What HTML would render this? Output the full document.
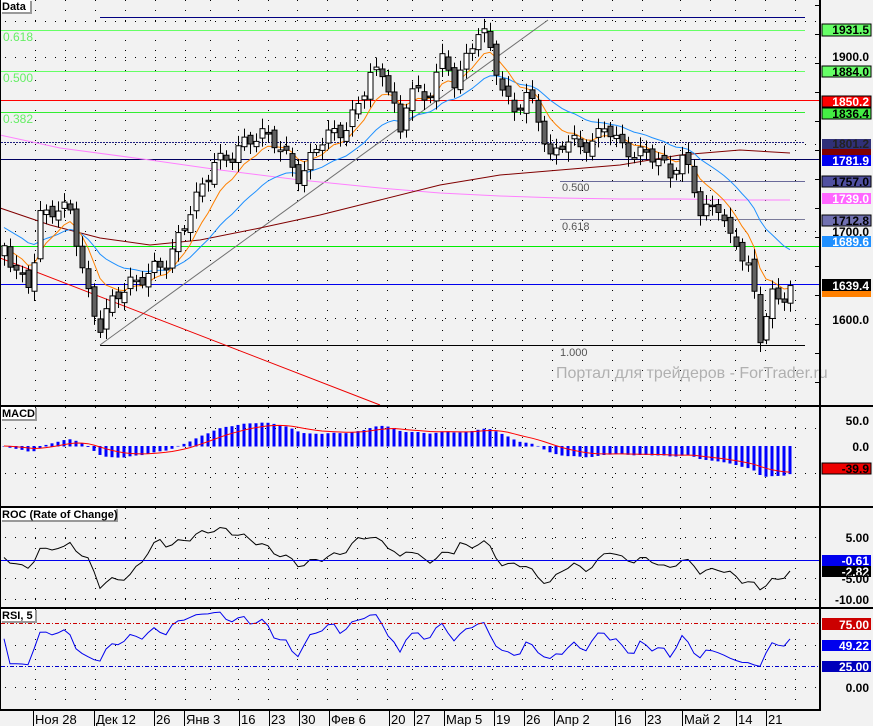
<!DOCTYPE html>
<html><head><meta charset="utf-8"><style>
html,body{margin:0;padding:0;background:#f2f2f2;}
svg{display:block;font-family:"Liberation Sans",sans-serif;}
.ax{font-weight:bold;font-size:12px;fill:#000;}
.lb{font-weight:bold;font-size:11px;}
</style></head><body>
<svg id="s" width="873" height="726" viewBox="0 0 873 726" xmlns="http://www.w3.org/2000/svg">
<rect width="873" height="726" fill="#f2f2f2"/>
<defs>
<clipPath id="cm"><rect x="1" y="0" width="818" height="405"/></clipPath>
<clipPath id="cd"><rect x="1" y="407" width="818" height="99"/></clipPath>
<clipPath id="cr"><rect x="1" y="508" width="818" height="99"/></clipPath>
<clipPath id="cs"><rect x="1" y="610" width="818" height="99"/></clipPath>
</defs>
<g id="grid" stroke="#000" stroke-width="1" stroke-dasharray="1 9" fill="none"></g>
<g fill="none" stroke-width="1">
<line x1="100" y1="17.5" x2="805" y2="17.5" stroke="#000080"/>
<line x1="1" y1="30.5" x2="805" y2="30.5" stroke="#66ff66"/>
<line x1="1" y1="71.5" x2="805" y2="71.5" stroke="#66ff66"/>
<line x1="1" y1="100.5" x2="819" y2="100.5" stroke="#ff0000"/>
<line x1="1" y1="112.5" x2="805" y2="112.5" stroke="#33ee33"/>
<line x1="1" y1="142.5" x2="805" y2="142.5" stroke="#202080" stroke-dasharray="2 1"/>
<line x1="1" y1="159.5" x2="819" y2="159.5" stroke="#000060"/>
<line x1="560" y1="181.5" x2="805" y2="181.5" stroke="#6a6a9a"/>
<line x1="560" y1="219.5" x2="805" y2="219.5" stroke="#7a7a9a"/>
<line x1="1" y1="246.5" x2="819" y2="246.5" stroke="#00ee00"/>
<line x1="1" y1="284.5" x2="819" y2="284.5" stroke="#0000ee"/>
<line x1="100" y1="345.5" x2="805" y2="345.5" stroke="#000"/>
<line x1="100" y1="345" x2="548" y2="20" stroke="#707070"/>
<line x1="0" y1="258" x2="380" y2="405" stroke="#ee0000"/>
</g>
<g font-size="12" fill="#66ee66">
<text x="3" y="41">0.618</text><text x="3" y="82">0.500</text><text x="3" y="123">0.382</text>
</g>
<g font-size="11" fill="#555">
<text x="562" y="191">0.500</text><text x="562" y="230">0.618</text><text x="560" y="356">1.000</text>
</g>
<text x="556" y="378" font-size="16" fill="#b0b0b0">Портал для трейдеров - ForTrader.ru</text>
<g id="main" clip-path="url(#cm)"></g>
<g id="macd" clip-path="url(#cd)"></g>
<g id="roc" clip-path="url(#cr)"></g>
<g id="rsi" clip-path="url(#cs)"></g>
<line x1="1" y1="560.5" x2="819" y2="560.5" stroke="#0000ee"/>
<line x1="1" y1="623.5" x2="819" y2="623.5" stroke="#cc0000" stroke-dasharray="4 2 1 2"/>
<line x1="1" y1="666.5" x2="819" y2="666.5" stroke="#0000cc" stroke-dasharray="4 2 1 2"/>
<g fill="#000">
<rect x="0" y="0" width="1" height="711"/>
<rect x="819" y="0" width="2" height="711"/>
<rect x="0" y="405" width="873" height="2"/>
<rect x="0" y="506" width="873" height="2"/>
<rect x="0" y="607" width="873" height="2"/>
<rect x="0" y="709" width="821" height="2"/>
</g>
<g class="lb">
<rect x="2" y="1" width="30" height="13" fill="#999"/><rect x="1" y="0" width="29" height="12" fill="#fff"/><text x="2" y="10">Data</text>
<rect x="2" y="408" width="35" height="13" fill="#999"/><rect x="1" y="407" width="34" height="12" fill="#fff"/><text x="2" y="417">MACD</text>
<rect x="2" y="509" width="116" height="13" fill="#999"/><rect x="1" y="508" width="115" height="12" fill="#fff"/><text x="2" y="518">ROC (Rate of Change)</text>
<rect x="2" y="610" width="35" height="13" fill="#999"/><rect x="1" y="609" width="34" height="12" fill="#fff"/><text x="2" y="619">RSI, 5</text>
</g>
<g id="ticks" stroke="#000"></g>
<g class="ax" text-anchor="end">
<rect x="822" y="24" width="49" height="12" fill="#66ff66" stroke="#000"/><text x="869" y="34">1931.5</text>
<text x="869" y="61">1900.0</text>
<rect x="822" y="66" width="49" height="11" fill="#66ff66" stroke="#000"/><text x="869" y="76">1884.0</text>
<rect x="822" y="96" width="49" height="11" fill="#ff0000" stroke="#000"/><text x="869" y="106" fill="#fff">1850.2</text>
<rect x="822" y="108" width="49" height="11" fill="#44ee44" stroke="#000"/><text x="869" y="118">1836.4</text>
<rect x="822" y="139" width="49" height="10" fill="#303078"/><text x="869" y="148" fill="#222">1801.2</text>
<rect x="822" y="149" width="49" height="6" fill="#800000"/>
<rect x="822" y="155" width="49" height="11" fill="#0000ee"/><text x="869" y="165" fill="#fff">1781.9</text>
<rect x="822" y="176" width="49" height="11" fill="#5050a0" stroke="#000"/><text x="869" y="186">1757.0</text>
<rect x="822" y="193" width="49" height="11" fill="#ff66ff"/><text x="869" y="203" fill="#fff">1739.0</text>
<rect x="822" y="215" width="49" height="11" fill="#7070b0" stroke="#000"/><text x="869" y="225">1712.8</text>
<text x="869" y="236">1700.0</text>
<rect x="822" y="236" width="49" height="11" fill="#2090ff"/><text x="869" y="246" fill="#fff">1689.6</text>
<rect x="822" y="279" width="49" height="12" fill="#000"/><text x="869" y="290" fill="#fff">1639.4</text>
<rect x="822" y="291" width="49" height="6" fill="#ff8000"/>
<text x="869" y="324">1600.0</text>
<text x="869" y="425">50.0</text>
<text x="869" y="451">0.0</text>
<rect x="822" y="463" width="49" height="11" fill="#ee0000" stroke="#000"/><text x="869" y="473">-39.9</text>
<text x="869" y="542">5.00</text>
<rect x="822" y="555" width="49" height="11" fill="#0000ee"/><text x="869" y="565" fill="#fff">-0.61</text>
<rect x="822" y="566" width="49" height="11" fill="#000"/><text x="869" y="576" fill="#fff">-2.82</text>
<text x="869" y="583">-5.00</text>
<text x="869" y="604">-10.00</text>
<rect x="822" y="618" width="49" height="12" fill="#cc0000"/><text x="869" y="629" fill="#fff">75.00</text>
<rect x="822" y="640" width="49" height="11" fill="#0000ee"/><text x="869" y="650" fill="#fff">49.22</text>
<rect x="822" y="661" width="49" height="11" fill="#0000bb"/><text x="869" y="671" fill="#fff">25.00</text>
<text x="869" y="692">0.00</text>
</g>
<g font-size="13" fill="#000">
<text x="35" y="724">Ноя 28</text><text x="96" y="724">Дек 12</text><text x="156" y="724">26</text><text x="186" y="724">Янв 3</text>
<text x="241" y="724">16</text><text x="271" y="724">23</text><text x="301" y="724">30</text><text x="331" y="724">Фев 6</text>
<text x="391" y="724">20</text><text x="416" y="724">27</text><text x="446" y="724">Мар 5</text><text x="496" y="724">19</text>
<text x="526" y="724">26</text><text x="556" y="724">Апр 2</text><text x="617" y="724">16</text><text x="647" y="724">23</text>
<text x="684" y="724">Май 2</text><text x="738" y="724">14</text><text x="768" y="724">21</text>
</g>
<g stroke="#000" id="bt"></g>
</svg>
<script>
var NS="http://www.w3.org/2000/svg";
function el(p,t,a){var e=document.createElementNS(NS,t);for(var k in a)e.setAttribute(k,a[k]);p.appendChild(e);return e;}
var G=document.getElementById('grid');
var vx=[35,65,95,125,155,185,210,238,268,297,327,357,387,412,442,472,492,522,552,582,612,642,680,710,735,765,795];
vx.forEach(function(x){[[0,405],[407,506],[508,607],[609,709]].forEach(function(r){el(G,'line',{x1:x+.5,y1:r[0],x2:x+.5,y2:r[1]});});});
[21,57,144,231,318,428,473,537,578,599,645,687].forEach(function(y){el(G,'line',{x1:5,y1:y+.5,x2:819,y2:y+.5});});
var T=document.getElementById('ticks');
for(var y=5;y<405;y+=29)el(T,'line',{x1:819,y1:y+.5,x2:815,y2:y+.5});
var B=document.getElementById('bt');
[33,94,154,184,239,269,299,329,389,414,444,494,524,554,615,645,682,736,766].forEach(function(x){el(B,'line',{x1:x+.5,y1:711,x2:x+.5,y2:726});});
var kx=[3,20,30,40,55,70,80,90,100,115,130,150,165,180,200,215,230,245,260,275,290,300,315,330,345,360,370,385,395,400,410,425,440,455,470,480,490,505,515,525,540,550,565,580,595,605,620,640,655,670,680,690,700,710,720,730,740,750,760,770,780,790];
var ky=[240,280,290,215,205,215,260,300,325,300,280,275,265,230,195,155,160,145,128,145,165,175,150,135,125,105,75,70,110,140,85,100,60,85,45,25,55,95,110,95,125,155,140,150,135,125,150,150,160,175,150,175,215,210,200,240,255,270,335,290,310,285];
function ip(x){for(var j=0;j<kx.length-1;j++){if(x<=kx[j+1]){var t=(x-kx[j])/(kx[j+1]-kx[j]);return ky[j]+t*(ky[j+1]-ky[j]);}}return ky[ky.length-1];}
var N=132,X=[],C=[],O=[],P=[];
for(var i=0;i<N;i++){var x=4+i*6;X.push(x);C.push(ip(x)+7*Math.sin(i*1.7)+4*Math.sin(i*0.9+1));}
for(var i=0;i<N;i++){O.push(i?C[i-1]+4*Math.sin(i*2.9):C[0]+10);P.push(1900-(C[i]-57)/0.87);}
var M=document.getElementById('main');
function ema(a,n){var k=2/(n+1),r=[a[0]];for(var i=1;i<a.length;i++)r.push(r[i-1]+k*(a[i]-r[i-1]));return r;}
function pl(g,xs,ys,c,w){var s='';for(var i=0;i<xs.length;i++)s+=xs[i].toFixed(1)+','+ys[i].toFixed(1)+' ';el(g,'polyline',{points:s,fill:'none',stroke:c,'stroke-width':w||1});}
pl(M,[0,60,150,220,300,380,440,500,560,620,680,740,790],[135,148,160,170,180,188,193,196,198,199,199,200,200],'#ff80ff');
pl(M,[0,50,100,150,200,260,320,380,440,500,560,620,680,740,790],[208,225,238,245,240,228,215,200,185,175,170,165,155,150,153],'#800000');
var seed=[];for(var i=0;i<30;i++)seed.push(C[0]-20);
var eb=ema(seed.concat(C),21).slice(30),eo=ema(C,8);
pl(M,X,eb,'#1e90ff');pl(M,X,eo,'#ff8000');
for(var i=0;i<N;i++){var o=O[i],c=C[i],t=Math.min(o,c),b=Math.max(o,c);if(b-t<1.5){b=t+1.5;}
var h=t-(3+7*Math.abs(Math.sin(i*2.3))),l=b+(3+7*Math.abs(Math.cos(i*1.3)));
el(M,'line',{x1:X[i]+.5,y1:h,x2:X[i]+.5,y2:l,stroke:'#000'});
el(M,'rect',{x:X[i]-2,y:t,width:5,height:b-t,fill:(c<o?'#fff':'#606060'),stroke:'#000','stroke-width':1});}
var e12=ema(P,12),e26=ema(P,26),md=[];for(var i=0;i<N;i++)md.push(e12[i]-e26[i]);
var sg=ema(md,9);var D=document.getElementById('macd');
for(var i=0;i<N;i++){var v=446-md[i]*0.62;el(D,'rect',{x:X[i]-1.5,y:Math.min(v,446),width:3,height:Math.abs(v-446)+0.5,fill:'#0000ff'});}
pl(D,X,sg.map(function(v){return 446-v*0.62;}),'#ff0000');
var R=document.getElementById('roc'),ry=[];
for(var i=0;i<N;i++){var j=Math.max(0,i-10);var r=(P[i]-P[j])/P[j]*100;ry.push(Math.max(520,Math.min(600,557.5-r*3.8)));}
pl(R,X,ry,'#000');
var S=document.getElementById('rsi'),sy=[],ag=0,al=0;
for(var i=0;i<N;i++){var d=i?P[i]-P[i-1]:0;var g=d>0?d:0,l=d<0?-d:0;if(i<2){ag=g||2;al=l||2;}else{ag=(ag*4+g)/5;al=(al*4+l)/5;}
var rs=al==0?100:100-100/(1+ag/al);rs=22+0.68*rs;sy.push(687-0.86*rs);}
pl(S,X,sy,'#0000ee');
</script>
</body></html>
